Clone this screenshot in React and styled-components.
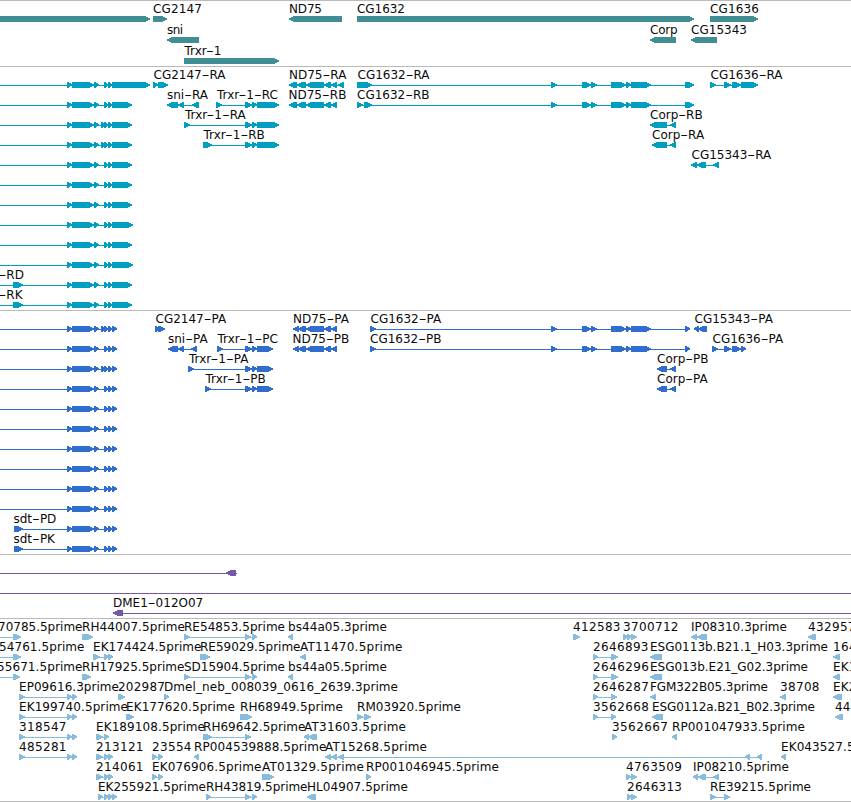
import React, { Fragment } from "react";
import styled, { createGlobalStyle } from "styled-components";

const GlobalStyle = createGlobalStyle`
  body {
    margin: 0;
    background: #fff;
    overflow: hidden;
  }
`;

const Browser = styled.main`
  width: 851px;
  height: 802px;
  overflow: hidden;
  background: #fff;
`;

const Track = styled.section`
  display: flex;
  flex-direction: column;
  border-top: 1px solid #b9b9b9;
  padding-bottom: ${({ $gap }) => $gap}px;
  color: ${({ $color }) => $color};

  &:last-child {
    border-bottom: 1px solid #b9b9b9;
  }
`;

const Lane = styled.svg`
  display: block;
  flex: none;
  width: 851px;
  height: ${({ $height }) => $height}px;
  overflow: visible;
  fill: currentColor;
`;

const Label = styled.text`
  font-family: "DejaVu Sans", sans-serif;
  font-size: 12px;
  fill: #0a0a0a;
`;

const Shape = styled.path`
  shape-rendering: crispEdges;
`;

// block with a pointed end, 6px tall
const exonPath = ([from, to], reverse) => {
  const head = Math.min(5, to - from - 1);
  return reverse
    ? `M${to} 15H${from + head}L${from} 17.4V18.6L${from + head} 21H${to}Z`
    : `M${from} 15H${to - head}L${to} 17.4V18.6L${to - head} 21H${from}Z`;
};

const Feature = ({ label, x, end, reverse, exons, span }) => {
  const from = span ? span[0] : exons[0][0];
  const to = span ? span[1] : exons[exons.length - 1][1];
  const line = `M${from} 18H${to}V19H${from}Z`;
  const blocks = exons.map((exon) => exonPath(exon, reverse)).join("");
  const parts = label.split("-");

  return (
    <g>
      <Shape d={line} />
      <Shape d={blocks} />
      {label && (
        <Label
          x={x}
          y={12}
          textLength={parts.length > 1 ? undefined : end - x + 0.5}
        >
          {parts.map((part, i) => (
            <Fragment key={i}>
              {/* hyphens are as wide as a digit */}
              {i > 0 && (
                <tspan textLength={7.8} lengthAdjust="spacingAndGlyphs">
                  -
                </tspan>
              )}
              {part}
            </Fragment>
          ))}
        </Label>
      )}
    </g>
  );
};

const fwd = (label, x, end, exons, span) => ({ label, x, end, exons, span });
const rev = (label, x, end, exons, span) => ({
  ...fwd(label, x, end, exons, span),
  reverse: true,
});

const genes = [
  [
    fwd("", 0, 0, [[-10, 150]]),
    fwd("CG2147", 153, 201.5, [[153, 167]]),
    rev("ND75", 289, 321.5, [[289, 342]]),
    fwd("CG1632", 357, 404.5, [[357, 694]]),
    fwd("CG1636", 710, 758.5, [[710, 758]]),
  ],
  [
    rev("sni", 167, 182.5, [[167, 199]]),
    rev("Corp", 650, 677, [[650, 676]]),
    rev("CG15343", 691, 746.5, [[691, 717]]),
  ],
  [fwd("Trxr-1", 184.5, 223, [[184, 279]])],
];

const sdtHead = [[67, 72], [72, 94], [94, 99]];
const pair = [[104, 108], [108, 112]];
const triple = [[101, 105], [104, 108], [108, 112]];

const sdtR = (small = pair, end = 132) =>
  fwd("", 0, 0, [...sdtHead, ...small, [112, end]], [0, end]);
const sdtP = (small = pair) =>
  fwd("", 0, 0, [...sdtHead, ...small, [112, 117]], [0, 117]);

const trxr = (first, end) => [first, [245, 252], [252, 257], [257, end]];
const cg1632 = (first, end) => [
  ...first,
  [551, 557],
  [582, 591],
  [591, 597],
  [611, 626],
  [626, 631],
  [631, 651],
  [685, end],
];
const nd75 = [[306, 324], [324, 331], [331, 337]];

const transcripts = [
  [
    sdtR(pair, 150),
    fwd("CG2147-RA", 153.5, 226, [[153, 158], [158, 168]]),
    rev("ND75-RA", 289, 346.7, [[289, 297], [297, 306], ...nd75, [338, 344]]),
    fwd("CG1632-RA", 357.5, 430, cg1632([[357, 372]], 694)),
    fwd("CG1636-RA", 710.5, 782.5, [[710, 716], [724, 731], [732, 741], [741, 758]]),
  ],
  [
    sdtR(),
    rev("sni-RA", 167, 206.5, [[167, 178], [178, 184], [192, 199]]),
    fwd("Trxr-1-RC", 217, 278.5, trxr([216, 222], 279)),
    rev("ND75-RB", 288.5, 344.5, [[289, 297], [297, 306], ...nd75]),
    fwd("CG1632-RB", 357, 427.5, cg1632([[357, 363], [364, 372]], 694)),
  ],
  [
    sdtR(triple),
    fwd("Trxr-1-RA", 185, 248, trxr([184, 190], 279)),
    rev("Corp-RB", 650, 699.5, [[650, 667], [670, 676]]),
  ],
  [
    sdtR(triple),
    fwd("Trxr-1-RB", 203.5, 265, trxr([203, 212], 279)),
    rev("Corp-RA", 652, 703.5, [[652, 667], [670, 676]]),
  ],
  [
    sdtR(),
    rev("CG15343-RA", 691.5, 772, [[691, 697], [697, 706], [713, 719]]),
  ],
  [sdtR()],
  [sdtR()],
  [sdtR(pair, 133)],
  [sdtR()],
  [sdtR(pair, 133)],
  [sdtR(), fwd("-RD", -1.5, 23.3, [[13, 23]])],
  [sdtR(), fwd("-RK", -1.5, 23, [[13, 23]])],
];

const proteins = [
  [
    sdtP(triple),
    fwd("CG2147-PA", 155.5, 227, [[155, 159], [158, 165]]),
    rev("ND75-PA", 293, 350, [[293, 299], [298, 306], ...nd75]),
    fwd("CG1632-PA", 370.5, 442, cg1632([[370, 376]], 690)),
    rev("CG15343-PA", 694.5, 774, [[694, 699], [698, 707]]),
  ],
  [
    sdtP(),
    rev("sni-PA", 168, 207, [[168, 178], [178, 184], [191, 197]]),
    fwd("Trxr-1-PC", 217.5, 278.5, trxr([217, 223], 273)),
    rev("ND75-PB", 292.5, 347.5, [[293, 299], [298, 306], ...nd75]),
    fwd("CG1632-PB", 370, 439.5, cg1632([[370, 376]], 690)),
    fwd("CG1636-PA", 712.5, 784, [[712, 718], [724, 731], [732, 741], [741, 746]]),
  ],
  [
    sdtP(triple),
    fwd("Trxr-1-PA", 189, 251, trxr([188, 194], 273)),
    rev("Corp-PB", 657, 705.5, [[657, 667], [670, 676]]),
  ],
  [
    sdtP(),
    fwd("Trxr-1-PB", 205.5, 266, trxr([205, 211], 273)),
    rev("Corp-PA", 657, 708, [[657, 667], [670, 676]]),
  ],
  [sdtP()],
  [sdtP()],
  [sdtP()],
  [sdtP()],
  [sdtP()],
  [sdtP()],
  [fwd("sdt-PD", 13.5, 54.5, [[14, 23], ...sdtHead, ...pair, [112, 117]])],
  [fwd("sdt-PK", 13.5, 53.5, [[14, 23], ...sdtHead, ...pair, [112, 117]])],
];

const clones = [
  [rev("", 0, 0, [[226, 236]], [0, 237])],
  [rev("", 0, 0, [], [0, 851])],
  [rev("DME1-012O07", 113, 202.5, [[113, 123]], [113, 851])],
];

const long = [[19, 25], [67, 72], [72, 77]];
const trxrEst = [[184, 190], [245, 251], [252, 257]];
const tail = [[96, 103], [104, 109], [108, 113]];

const ests = [
  [
    fwd("70785.5prime", -2, 82, [[13, 21]], [0, 21]),
    fwd("RH44007.5prime", 82, 184.5, [[82, 93]]),
    fwd("RE54853.5prime", 184, 284.5, trxrEst),
    rev("bs44a05.3prime", 288, 386.5, [[288, 293]]),
    fwd("412583", 573, 620, [[573, 580]]),
    fwd("3700712", 623, 678, [[623, 628], [627, 632], [631, 637]]),
    rev("IP08310.3prime", 691, 786.5, [[691, 697], [697, 707]]),
    rev("432957", 808, 855, [[808, 816]]),
  ],
  [
    fwd("54761.5prime", -1, 84, [[13, 21]], [0, 21]),
    fwd("EK174424.5prime", 93, 201, [[93, 100], [104, 109], [108, 113]]),
    fwd("RE59029.5prime", 200, 300, [[200, 210]]),
    rev("AT11470.5prime", 300, 402, [[300, 306]]),
    fwd("2646893", 593, 648, [[593, 598], [611, 618]]),
    rev("ESG0113b.B21.1_H03.3prime", 650, 827.5, [[650, 662]]),
    rev("1643", 833, 864, [[833, 840]]),
  ],
  [
    fwd("55671.5prime", -3, 82, [[13, 20]], [0, 20]),
    fwd("RH17925.5prime", 82, 184, [[82, 91]]),
    fwd("SD15904.5prime", 184, 284.5, trxrEst),
    rev("bs44a05.5prime", 288, 386.5, [[288, 293]]),
    fwd("2646296", 593, 648.5, [[593, 598], [611, 618]]),
    rev("ESG013b.E21_G02.3prime", 650, 807.5, [[650, 662]]),
    rev("EK1", 833, 856, [[833, 840]]),
  ],
  [
    fwd("EP09616.3prime", 19, 118.5, long),
    fwd("202987", 118, 164.5, [[118, 125]]),
    fwd("Dmel_neb_008039_0616_2639.3prime", 164, 397.5, [[164, 169]]),
    fwd("2646287", 593, 648.5, [[593, 598], [611, 617]]),
    rev("FGM322B05.3prime", 650, 767.5, [[650, 656]]),
    rev("38708", 780, 819, [[780, 786]]),
    rev("EK2", 833, 856, [[833, 842]]),
  ],
  [
    fwd("EK199740.5prime", 19, 127.5, long),
    fwd("EK177620.5prime", 126, 234.5, [[126, 134]]),
    fwd("RH68949.5prime", 240, 342.5, [[240, 252]]),
    fwd("RM03920.5prime", 357, 460.5, [[357, 363], [364, 371]]),
    fwd("3562668", 593, 648.5, [[593, 598], [611, 616]]),
    rev("ESG0112a.B21_B02.3prime", 652, 814.5, [[652, 663]]),
    rev("44", 835, 850, [[835, 843]]),
  ],
  [
    fwd("318547", 19, 66, long),
    fwd("EK189108.5prime", 96, 204.5, [[96, 103], [104, 109]]),
    fwd("RH69642.5prime", 203, 305, [[203, 212], [245, 251]]),
    rev("AT31603.5prime", 304, 405.5, [[304, 309], [308, 317]]),
    fwd("3562667", 612, 667.5, [[612, 617]]),
    rev("RP001047933.5prime", 672, 804.5, [[672, 677]]),
  ],
  [
    fwd("485281", 19, 66, long),
    fwd("213121", 96, 143, tail),
    fwd("23554", 152, 191, [[152, 157], [158, 163]]),
    rev("RP004539888.5prime", 194, 326, [[194, 199]]),
    rev("AT15268.5prime", 325, 426.5, [
      [325, 331],
      [331, 337],
      [338, 344],
      [745, 750],
      [757, 762],
    ]),
    rev("EK043527.5prime", 781, 889.5, [[781, 786]]),
  ],
  [
    fwd("214061", 96, 143, tail),
    fwd("EK076906.5prime", 152, 261, [[152, 157], [158, 163]]),
    fwd("AT01329.5prime", 262, 363.5, [[262, 274]]),
    fwd("RP001046945.5prime", 366, 498.5, [[366, 371]]),
    fwd("4763509", 626, 681.5, [[626, 631], [631, 637]]),
    rev("IP08210.5prime", 693, 788.5, [[693, 698], [698, 706], [713, 719]]),
  ],
  [
    fwd("EK255921.5prime", 98, 205.5, [[98, 103], [104, 109], [108, 113], [112, 117]]),
    fwd("RH43819.5prime", 206, 307, [[206, 211], [245, 251], [252, 257]]),
    rev("HL04907.5prime", 307, 407.5, [[307, 316]]),
    fwd("2646313", 627, 681.5, [[627, 632], [631, 637]]),
    fwd("RE39215.5prime", 710, 810.5, [[710, 716], [724, 730]]),
  ],
];

const tracks = [
  { name: "genes", color: "#408e93", laneHeight: 21, gap: 2, lanes: genes },
  { name: "transcripts", color: "#009fc1", gap: 3, lanes: transcripts },
  { name: "proteins", color: "#306dcf", gap: 3, lanes: proteins },
  { name: "clones", color: "#7558a8", gap: 3, lanes: clones },
  { name: "ests", color: "#87bcdd", gap: 2, lanes: ests },
];

const App = () => (
  <>
    <GlobalStyle />
    <Browser>
      {tracks.map(({ name, color, laneHeight = 20, gap, lanes }) => (
        <Track key={name} $color={color} $gap={gap}>
          {lanes.map((features, i) => (
            <Lane key={i} $height={laneHeight}>
              {features.map((feature, j) => (
                <Feature key={j} {...feature} />
              ))}
            </Lane>
          ))}
        </Track>
      ))}
    </Browser>
  </>
);

export default App;
